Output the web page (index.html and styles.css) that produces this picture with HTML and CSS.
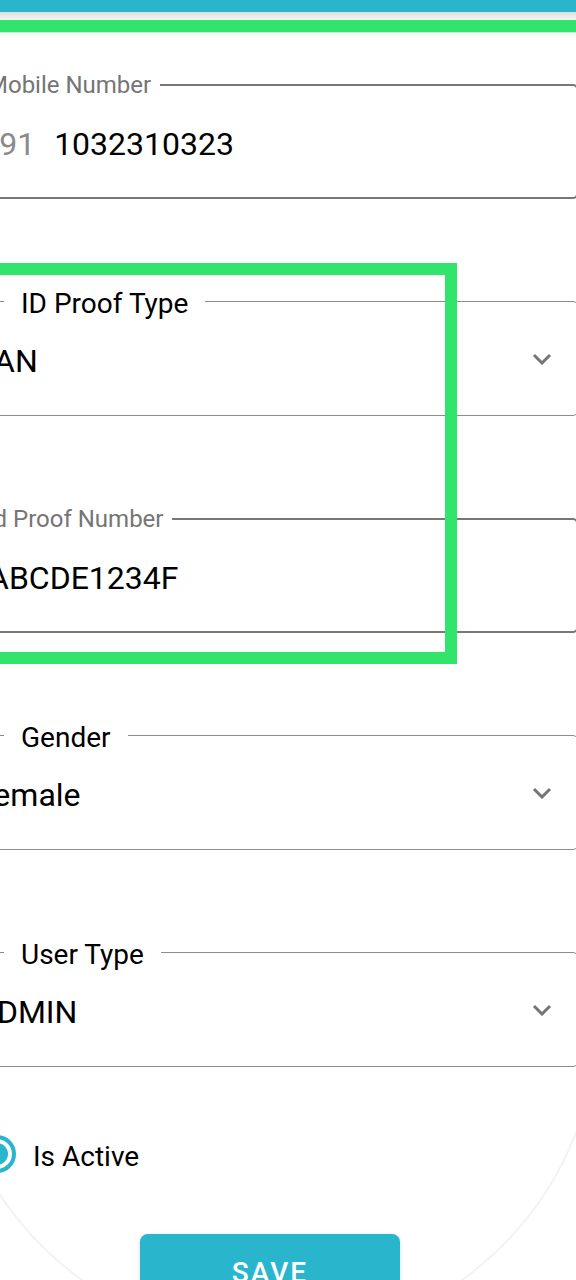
FILE: index.html
```html
<!DOCTYPE html>
<html>
<head>
    <meta charset="utf-8">
    <title>Edit User</title>
    <link rel="stylesheet" href="styles.css">
</head>
<body>
    <div class="topbar"></div>
    <div class="topbar-shade"></div>
    <div class="marker-strip"></div>

    <div class="user-form">
        <div class="field field--thick field--phone">
            <span class="field-label field-label--muted">Mobile Number</span>
            <span class="prefix">+91</span>
            <span class="value">1032310323</span>
        </div>

        <div class="id-group">
            <div class="field field--select">
                <span class="field-label">ID Proof Type</span>
                <span class="value">PAN</span>
                <svg class="chevron" width="20" height="12" viewBox="0 0 20 12"><polyline points="2,2 10,10 18,2" /></svg>
            </div>

            <div class="field field--thick field--text">
                <span class="field-label field-label--muted">Id Proof Number</span>
                <span class="value">ABCDE1234F</span>
            </div>
        </div>

        <div class="field field--select">
            <span class="field-label">Gender</span>
            <span class="value">Female</span>
            <svg class="chevron" width="20" height="12" viewBox="0 0 20 12"><polyline points="2,2 10,10 18,2" /></svg>
        </div>

        <div class="field field--select">
            <span class="field-label">User Type</span>
            <span class="value">ADMIN</span>
            <svg class="chevron" width="20" height="12" viewBox="0 0 20 12"><polyline points="2,2 10,10 18,2" /></svg>
        </div>

        <div class="form-footer">
            <label class="radio-row">
                <span class="radio"><span class="radio-dot"></span></span>
                <span class="radio-text">Is Active</span>
            </label>
            <button class="save-btn">SAVE</button>
        </div>
    </div>
</body>
</html>
```

FILE: styles.css
```css
body {
    margin: 0;
    background: #ffffff;
    font-family: Roboto, 'Liberation Sans', sans-serif;
    color: #000;
    overflow: hidden;
}

.topbar {
    height: 12px;
    background: #29b6cc;
}

.topbar-shade {
    height: 8px;
    background: linear-gradient(#dedede, #f5f5f5);
}

.marker-strip {
    height: 12px;
    background: #30e46c;
    border-bottom: 1px solid #b8f5cb;
}

.user-form {
    margin-left: -46px;
    margin-right: -2px;
    margin-top: 51px;
    display: flex;
    flex-direction: column;
    gap: 102px;
}

/* outlined inputs */
.field {
    position: relative;
    height: 115px;
    box-sizing: border-box;
    border: 1px solid #8c8c8c;
    border-radius: 5px;
    display: flex;
    align-items: center;
    padding-left: 21px;
    padding-right: 25px;
    background: #fff;
}

.field--thick {
    border: 2px solid #777777;
}

.field--phone {
    padding-left: 25px;
}

.field--text {
    padding-left: 32px;
}

.field-label {
    position: absolute;
    top: -12px;
    left: 49px;
    padding: 0 17px;
    background: #fff;
    font-size: 28px;
    line-height: 1;
    color: #000;
}

.field-label--muted {
    top: -13px;
    left: 22px;
    padding: 0 9px;
    font-size: 24px;
    color: #757575;
}

.value {
    font-size: 32px;
    line-height: 1;
    margin-top: 4px;
    flex: 1;
}

.prefix {
    font-size: 32px;
    line-height: 1;
    margin-top: 4px;
    color: #8a8a8a;
    margin-right: 19px;
}

.chevron {
    fill: none;
    stroke: #757575;
    stroke-width: 3;
}

/* green review box */
.id-group {
    position: relative;
    display: flex;
    flex-direction: column;
    gap: 102px;
}

.id-group::after {
    content: "";
    position: absolute;
    top: -38px;
    bottom: -31px;
    left: -20px;
    right: 121px;
    border: 12px solid #30e46c;
    pointer-events: none;
}

.form-footer {
    position: relative;
    overflow: hidden;
    margin-top: -102px;
    padding-top: 68px;
    height: 213px;
    box-sizing: border-box;
}

.form-footer::before {
    content: "";
    position: absolute;
    left: -9px;
    top: -379px;
    width: 654px;
    height: 654px;
    border: 2px solid #f3f3f3;
    border-radius: 50%;
    box-sizing: border-box;
}

.radio-row {
    position: relative;
    display: flex;
    align-items: center;
    margin-left: 24px;
    height: 38px;
}

.radio {
    width: 38px;
    height: 38px;
    box-sizing: border-box;
    border: 4px solid #29b6cc;
    border-radius: 50%;
    display: flex;
    align-items: center;
    justify-content: center;
    margin-right: 17px;
}

.radio-dot {
    width: 22px;
    height: 22px;
    border-radius: 50%;
    background: #29b6cc;
}

.radio-text {
    font-size: 28px;
    margin-top: 4px;
}

.save-btn {
    position: relative;
    display: block;
    margin: 61px 0 0 186px;
    width: 260px;
    height: 76px;
    border: none;
    border-radius: 8px;
    background: #29b6cc;
    color: #fff;
    font-family: Roboto, 'Liberation Sans', sans-serif;
    font-size: 28px;
    font-weight: 500;
    letter-spacing: 2px;
    box-shadow: 0 1px 4px rgba(0,0,0,0.15);
}
```
